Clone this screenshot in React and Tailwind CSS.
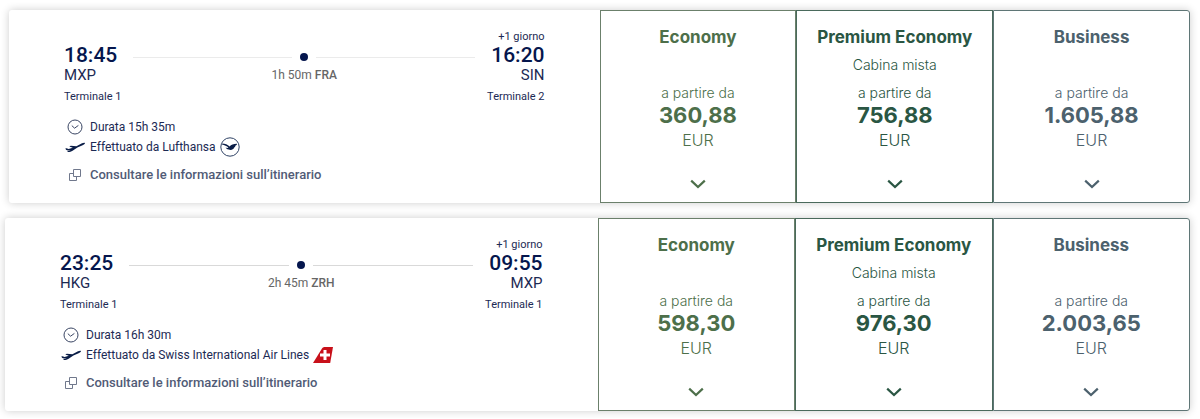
const flights = [
  {
    departure: { time: "18:45", airport: "MXP", terminal: "Terminale 1" },
    arrival: { time: "16:20", airport: "SIN", terminal: "Terminale 2" },
    stop: { wait: "1h 50m", airport: "FRA" },
    duration: "Durata 15h 35m",
    operator: "Effettuato da Lufthansa",
    logo: "lufthansa",
    line: "bg-[#ebebeb]",
    inset: "ml-[9px]",
    prices: ["360,88", "756,88", "1.605,88"],
  },
  {
    departure: { time: "23:25", airport: "HKG", terminal: "Terminale 1" },
    arrival: { time: "09:55", airport: "MXP", terminal: "Terminale 1" },
    stop: { wait: "2h 45m", airport: "ZRH" },
    duration: "Durata 16h 30m",
    operator: "Effettuato da Swiss International Air Lines",
    logo: "swiss",
    line: "bg-[#d9d9d9]",
    inset: "ml-[5px]",
    prices: ["598,30", "976,30", "2.003,65"],
  },
];

const cabins = [
  { name: "Economy", note: "", color: "text-[#4d6f4a] border-[#6b806b]" },
  { name: "Premium Economy", note: "Cabina mista", color: "text-[#2a5643] border-[#4a6a5c]" },
  { name: "Business", note: "", color: "text-[#4c616d] border-[#5f7676] rounded-r-[3px]" },
];

const ClockIcon = () => (
  <svg width="16" height="16" viewBox="0 0 16 16" fill="none" stroke="#3a4664" aria-hidden="true">
    <circle cx="8" cy="8" r="7" />
    <path d="M4.8 6.6 7.6 9.2 11.4 6.4" />
  </svg>
);

const PlaneIcon = () => (
  <svg width="20" height="12" viewBox="0 0 20 12" fill="#0a1d47" aria-hidden="true">
    <path d="M.3 7.600 1.400 7.200 3.600 8.100 7.800 6.700 4.300 5.400 5.800 4.700 11.400 5.200 17 2.300C18.300 1.700 19.600 1.600 19.900 2.100 20.200 2.700 19 3.600 17.600 4.200L12.400 6.600 7.600 9.700C6.200 10.600 4.400 11.100 2.600 11L2.400 10.300C3.600 10.200 4.800 9.700 5.700 9L3.200 9.500C1.800 9.600.8 8.800.3 7.600z" />
  </svg>
);

const CopyIcon = () => (
  <svg width="12" height="12" viewBox="0 0 12 12" fill="none" stroke="#70788c" aria-hidden="true">
    <path d="M4.5.5h7v7h-7z" />
    <path d="M4.5 4.500h-4v7h7v-4" />
  </svg>
);

const LufthansaLogo = () => (
  <svg width="20" height="20" viewBox="0 0 20 20" aria-hidden="true">
    <circle cx="10" cy="10" r="9.200" fill="none" stroke="#2f4265" />
    <path
      fill="#0a1d47"
      d="M2 6.600C5.200 6.600 7.600 7.800 9.600 9.400 11.200 7.600 13.600 6.600 17.200 6.700 16.900 7.800 16.200 8.400 15.200 8.800 15.500 9.200 15.200 9.900 14.400 10.300 14.100 11.700 12.500 12.900 10.400 12.900 8 12.900 6.400 11.900 5.600 10.600 6.600 11 7.700 11 8.500 10.600 6.800 9.100 4.600 8 2 7.500z"
    />
  </svg>
);

const SwissLogo = () => (
  <svg width="20" height="16" viewBox="0 0 20 16" aria-hidden="true">
    <path d="M9 1.500C9.700.5 10.500 0 11.800 0H20l-2.800 16H0z" fill="#c8101a" />
    <path d="M10.500 3h3v3.500H17v3h-3.500V13h-3V9.500H7v-3h3.500z" fill="#fff" />
  </svg>
);

const ChevronIcon = () => (
  <svg
    className="mt-[26px]"
    width="16"
    height="10"
    viewBox="0 0 16 10"
    fill="none"
    stroke="currentColor"
    strokeWidth="2.2"
    aria-hidden="true"
  >
    <path d="M1.200 1.600 8 8 14.800 1.600" />
  </svg>
);

const Airport = ({ point, nextDay, align }) => (
  <div className={`flex flex-col text-[#1c2a54] ${align}`}>
    {nextDay && <span className="text-[11px] leading-4">{nextDay}</span>}
    <span className="text-[21px] leading-5 font-medium text-[#05164d]">{point.time}</span>
    <span className="text-[15px] leading-5">{point.airport}</span>
    <span className="mt-1 text-[11px] leading-4">{point.terminal}</span>
  </div>
);

const Detail = ({ icon, children }) => (
  <li className="flex min-h-5 items-center gap-1">
    <span className="flex w-[22px] justify-center">{icon}</span>
    {children}
  </li>
);

const FlightCard = ({ flight }) => (
  <article className={`flex rounded-[3px] bg-white shadow-[0_0_8px_rgba(0,0,0,0.2)] ${flight.inset}`}>
    <div className="w-1/2 px-[55px] pt-[19px]">
      <div className="flex items-end gap-3">
        <Airport point={flight.departure} align="items-start" />
        <div className="flex-1">
          <div className="flex h-4 items-center gap-2">
            <span className={`h-px flex-1 ${flight.line}`} />
            <span className="size-2 rounded-full bg-[#05164d]" />
            <span className={`h-px flex-1 ${flight.line}`} />
          </div>
          <p className="mb-5 text-center text-xs leading-5 text-[#666]">
            {flight.stop.wait} <span className="font-medium">{flight.stop.airport}</span>
          </p>
        </div>
        <Airport point={flight.arrival} nextDay="+1 giorno" align="items-end" />
      </div>

      <ul className="mt-3 text-xs text-[#1c2a54]">
        <Detail icon={<ClockIcon />}>{flight.duration}</Detail>
        <Detail icon={<PlaneIcon />}>
          {flight.operator}
          {flight.logo === "lufthansa" ? <LufthansaLogo /> : <SwissLogo />}
        </Detail>
      </ul>
      <a href="#" className="mt-2 flex items-center gap-1 text-[13px] leading-5 font-medium text-[#515b76]">
        <span className="flex w-[22px] justify-center">
          <CopyIcon />
        </span>
        Consultare le informazioni sull’itinerario
      </a>
    </div>

    <div className="grid w-1/2 grid-cols-3 font-['Inter',sans-serif]">
      {cabins.map((cabin, i) => (
        <button
          key={cabin.name}
          type="button"
          className={`flex flex-col items-center border pt-3 pb-[13px] ${cabin.color}`}
        >
          <span className="text-[17px] leading-7 font-bold whitespace-nowrap">{cabin.name}</span>
          <span className="h-7 text-sm leading-7 font-light">{cabin.note}</span>
          <span className="mt-1 text-sm leading-5 font-light">a partire da</span>
          <span className="text-[22px] leading-6 font-bold">{flight.prices[i]}</span>
          <span className="text-base leading-[26px] font-light">EUR</span>
          <ChevronIcon />
        </button>
      ))}
    </div>
  </article>
);

const App = () => (
  <main className="flex flex-col gap-[15px] bg-white pt-[10px] pr-[10px] pb-[7px] font-['Roboto',sans-serif]">
    {flights.map((flight) => (
      <FlightCard key={flight.duration} flight={flight} />
    ))}
  </main>
);

export default App;
